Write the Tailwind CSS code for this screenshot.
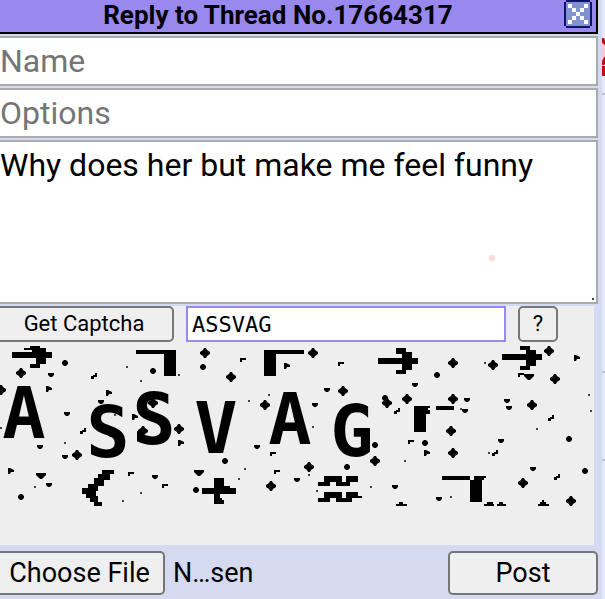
<!DOCTYPE html>
<html lang="en">
<head>
    <meta charset="UTF-8">
    <meta name="viewport" content="width=device-width, initial-scale=1.0">
    <title>Reply to Thread No.17664317</title>
    <script src="https://cdn.jsdelivr.net/npm/@tailwindcss/browser@4"></script>
</head>
<body class="flex min-h-screen overflow-hidden bg-[#d6daf0] font-[Roboto,sans-serif] text-black">
    <!-- Quick reply -->
    <form class="min-w-0 flex-1">
        <div class="flex h-[34px] items-center border-r-2 border-b-2 border-black bg-[#9988ee] pr-1">
            <h1 class="flex-1 pr-2 pb-0.5 text-center text-[26px] leading-[30px] font-bold">Reply to Thread No.17664317</h1>
            <button type="button" aria-label="Close" class="-mt-1 size-7">
                <svg viewBox="0 0 28 28" class="size-7" shape-rendering="crispEdges">
                    <path fill="#10106a" d="M2 0h24v2h2v24h-2v2H2v-2H0V2h2z"/>
                    <path fill="#8093cf" d="M2 2h24v24H2z"/>
                    <path fill="#fff" d="M4 4h4v4H4zM8 8h4v4H8zM12 12h4v4h-4zM16 16h4v4h-4zM20 20h4v4h-4zM20 4h4v4h-4zM16 8h4v4h-4zM8 16h4v4H8zM4 20h4v4H4z"/>
                </svg>
            </button>
        </div>

        <div class="mt-0.5 flex flex-col gap-0.5">
            <input type="text" aria-label="Name" placeholder="Name" class="h-[50px] w-full border-2 border-l-0 border-[#aaa] bg-white text-[32px] outline-none placeholder:text-[#757575]">
            <input type="text" aria-label="Options" placeholder="Options" class="h-[50px] w-full border-2 border-l-0 border-[#aaa] bg-white text-[32px] outline-none placeholder:text-[#757575]">
            <div class="relative h-[164px]">
                <textarea aria-label="Comment" class="block h-full w-full resize-none border-2 border-l-0 border-[#aaa] bg-white pt-1 text-[32px] leading-[38px] outline-none">Why does her but make me feel funny</textarea>
                <span class="absolute right-[103px] bottom-[43px] size-1.5 rounded-full bg-[#fbdcd6]"></span>
                <span class="absolute right-1 bottom-1 size-0.5 bg-[#444]"></span>
            </div>
        </div>

        <!-- Captcha -->
        <div class="mt-0.5 mr-1 h-[239px] bg-[#eee]">
            <div class="flex h-9 gap-3">
                <button type="button" class="w-[174px] rounded-r-[5px] border-2 border-l-0 border-[#767676] bg-[#efefef] pr-1 text-[22px] leading-8">Get Captcha</button>
                <input type="text" aria-label="Captcha" value="ASSVAG" class="w-80 border-2 border-[#9988ee] bg-white px-1 font-['DejaVu_Sans_Mono',monospace] text-[22px] outline-none">
                <button type="button" aria-label="Help" class="w-10 rounded-[5px] border-2 border-[#767676] bg-[#efefef] text-[22px] leading-8">?</button>
            </div>
            <svg viewBox="0 342 594 164" class="w-full" role="img" aria-label="Captcha image">
                <defs>
                    <path id="big" d="M-1-5h2l1 2 3 2v2L2 3 1 5h-2l-1-2-3-2v-2l3-2z"/>
                    <path id="small" d="M-1-3h2l2 2v2L1 3h-2l-2-2v-2z"/>
                    <path id="tri" d="M-3-2h6v2L1 2h-2l-2-2z"/>
                    <path id="wide" d="M-5-3H5v2L1 3h-2l-4-4z"/>
                    <path id="flag" d="M-3-3h2l4 2v2H0l-1 2h-2z"/>
                    <path id="zig" d="M1-3h2v4H0v2h-3V0h2v-1h2z"/>
                    <path id="corner" d="M-3-2h6v2h-4v2h-2z"/>
                    <path id="dot" d="M-1-1h2v2h-2z"/>
                </defs>
                <g class="font-['DejaVu_Sans_Mono',monospace] text-[72px] font-bold" text-anchor="middle">
                    <text x="24" y="438">A</text>
                    <text x="108" y="457">S</text>
                    <text x="154" y="444">S</text>
                    <text x="216" y="453">V</text>
                    <text x="290" y="444">A</text>
                    <text x="352" y="456">G</text>
                </g>
                <!-- symbols -->
                <g shape-rendering="crispEdges">
                    <path d="M30 346h10v2h6v4h6v6h-6v6h-6v4H30v-4h6v-6H12v-6h20v-2h-8v-2h6z"/>
                    <path d="M136 350h40v26h-12v-22h-28z"/>
                    <path d="M264 350h40v4h-28v22h-12z"/>
                    <path d="M396 348h10v4h6v6h6v6h-6v6h-6v4H396v-4h6v-6h-24v-6h24v-4h-6z"/>
                    <path d="M520 346h10v4h6v4h6v6h-6v6h-6v4h-10v-4h6v-6h-24v-6h24v-4h-6z"/>
                    <path d="M414 406h16v2h-2v2h2v4h-4v18h-12zM436 406h18v4h-18z"/>
                    <path d="M102 470h12v4h-4v6h-6v6h-6v5h-2v5h2v6h4v4h-8v-4h-4v-4h-4v-4h-4v-6h6v-4h6v-6h4v-4h4z"/>
                    <path d="M214 478h10v8h6v2h6v6h-16v4h2v2h2v4h-10v-10h-12v-6h12z"/>
                    <path d="M324 476h18v6h4v-6h12v6h-8v4h-14v-4h-6v4h-12v-4h6z"/>
                    <path d="M324 492h18v6h4v-6h12v4h4v2h-10v4h-16v-4h-6v4h-12v-4h6z"/>
                    <path d="M442 476h28v4h-28zM474 476h12v2h-2v2h-2v22h-12v-22h4z"/>
                    <path d="M399 502h4v2h4v2H396v-2h3zM487 502h6v2h1v2H484v-2h3zM499 502h4v2h3v2h-9v-2h2zM542 500h2v2h2v2h3v2h-11v-2h2v-2h2z"/>
                </g>
                <!-- noise -->
                <g>
                    <use href="#big" x="21" y="373"/><use href="#big" x="1" y="390"/><use href="#big" x="77" y="455"/>
                    <use href="#big" x="205" y="353"/><use href="#big" x="231" y="377"/><use href="#big" x="265" y="405"/>
                    <use href="#big" x="179" y="429"/><use href="#big" x="271" y="486"/><use href="#big" x="153" y="403"/>
                    <use href="#big" x="143" y="431"/><use href="#big" x="313" y="353"/><use href="#big" x="343" y="391"/>
                    <use href="#big" x="407" y="399"/><use href="#big" x="375" y="461"/><use href="#big" x="309" y="467"/>
                    <use href="#big" x="387" y="403"/><use href="#big" x="453" y="363"/><use href="#big" x="493" y="365"/>
                    <use href="#big" x="549" y="351"/><use href="#big" x="555" y="379"/><use href="#big" x="453" y="399"/>
                    <use href="#big" x="532" y="405"/><use href="#big" x="451" y="431"/><use href="#big" x="453" y="453"/>
                    <use href="#big" x="523" y="483"/><use href="#big" x="571" y="501"/>
                    <use href="#small" x="65" y="363"/><use href="#small" x="21" y="497"/><use href="#small" x="203" y="367"/>
                    <use href="#small" x="153" y="371"/><use href="#small" x="225" y="461"/><use href="#small" x="196" y="490"/>
                    <use href="#small" x="437" y="375"/><use href="#small" x="375" y="445"/><use href="#small" x="347" y="467"/>
                    <use href="#small" x="425" y="443"/><use href="#small" x="569" y="439"/><use href="#small" x="585" y="471"/>
                    <use href="#small" x="385" y="398"/>
                    <use href="#tri" x="51" y="375"/><use href="#tri" x="67" y="414"/><use href="#tri" x="101" y="402"/>
                    <use href="#tri" x="65" y="457"/><use href="#tri" x="49" y="485"/><use href="#tri" x="111" y="435"/>
                    <use href="#tri" x="40" y="447"/><use href="#tri" x="257" y="447"/><use href="#tri" x="155" y="477"/>
                    <use href="#tri" x="297" y="480"/><use href="#tri" x="327" y="390"/><use href="#tri" x="315" y="405"/>
                    <use href="#tri" x="415" y="385"/><use href="#tri" x="395" y="487"/><use href="#tri" x="439" y="499"/>
                    <use href="#tri" x="467" y="400"/><use href="#tri" x="465" y="411"/><use href="#tri" x="507" y="401"/>
                    <use href="#tri" x="509" y="408"/><use href="#tri" x="501" y="441"/><use href="#tri" x="533" y="469"/>
                    <use href="#wide" x="41" y="476"/><use href="#wide" x="199" y="473"/><use href="#wide" x="529" y="377"/>
                    <use href="#flag" x="49" y="389"/><use href="#flag" x="109" y="393"/><use href="#flag" x="11" y="471"/>
                    <use href="#flag" x="135" y="417"/><use href="#flag" x="181" y="443"/><use href="#flag" x="287" y="366"/>
                    <use href="#flag" x="427" y="453"/><use href="#flag" x="577" y="358"/>
                    <use href="#zig" x="94" y="376"/><use href="#zig" x="83" y="431"/><use href="#zig" x="397" y="411"/>
                    <use href="#zig" x="551" y="418"/><use href="#zig" x="495" y="453"/><use href="#zig" x="557" y="477"/>
                    <use href="#corner" x="131" y="474"/><use href="#corner" x="243" y="360"/><use href="#corner" x="273" y="454"/>
                    <use href="#corner" x="277" y="472"/><use href="#corner" x="165" y="486"/><use href="#corner" x="341" y="364"/>
                    <use href="#corner" x="411" y="442"/><use href="#corner" x="521" y="375"/>
                    <g fill="#444">
                        <use href="#dot" x="127" y="367"/><use href="#dot" x="141" y="381"/><use href="#dot" x="115" y="415"/>
                        <use href="#dot" x="65" y="443"/><use href="#dot" x="35" y="487"/><use href="#dot" x="123" y="501"/>
                        <use href="#dot" x="141" y="493"/><use href="#dot" x="1" y="428"/><use href="#dot" x="179" y="375"/>
                        <use href="#dot" x="249" y="401"/><use href="#dot" x="269" y="395"/><use href="#dot" x="245" y="469"/>
                        <use href="#dot" x="239" y="479"/><use href="#dot" x="313" y="427"/><use href="#dot" x="405" y="461"/>
                        <use href="#dot" x="371" y="487"/><use href="#dot" x="317" y="491"/><use href="#dot" x="309" y="475"/>
                        <use href="#dot" x="485" y="363"/><use href="#dot" x="589" y="395"/><use href="#dot" x="591" y="411"/>
                        <use href="#dot" x="537" y="429"/><use href="#dot" x="489" y="453"/><use href="#dot" x="461" y="409"/>
                        <use href="#dot" x="451" y="497"/>
                    </g>
                </g>
            </svg>
        </div>

        <div class="mt-1.5 flex h-11 items-center justify-between">
            <input type="file" aria-label="File" class="h-11 w-[255px] text-[27px] leading-10 file:mr-2 file:h-11 file:w-[165px] file:rounded-r-[5px] file:border-2 file:border-l-0 file:border-solid file:border-[#767676] file:bg-[#efefef] file:pr-1 file:text-[27px] file:leading-10">
            <button type="submit" class="h-11 w-[150px] rounded-[5px] border-2 border-[#767676] bg-[#efefef] text-[27px] leading-10">Post</button>
        </div>
    </form>

    <!-- Edge of the thread behind the form -->
    <div class="ml-1 flex w-[3px] flex-col bg-[#e4e9fa]">
        <svg viewBox="0 0 3 38" class="mt-[38px] h-[38px] w-[3px]">
            <path fill="#f6c9d4" d="M0 6h3v24H0z"/>
            <path fill="#c00a14" d="M0 0h2l1 2v5L0 5zM3 18v8l-1 1H0v-4zM0 28h3v10H0z"/>
        </svg>
        <div class="mt-[17px] h-0.5 bg-[#b7c5d9]"></div>
        <div class="h-[276px]"></div>
        <div class="h-0.5 bg-[#b7c5d9]"></div>
        <div class="h-[86px]"></div>
        <div class="h-0.5 bg-[#b7c5d9]"></div>
    </div>
</body>
</html>
